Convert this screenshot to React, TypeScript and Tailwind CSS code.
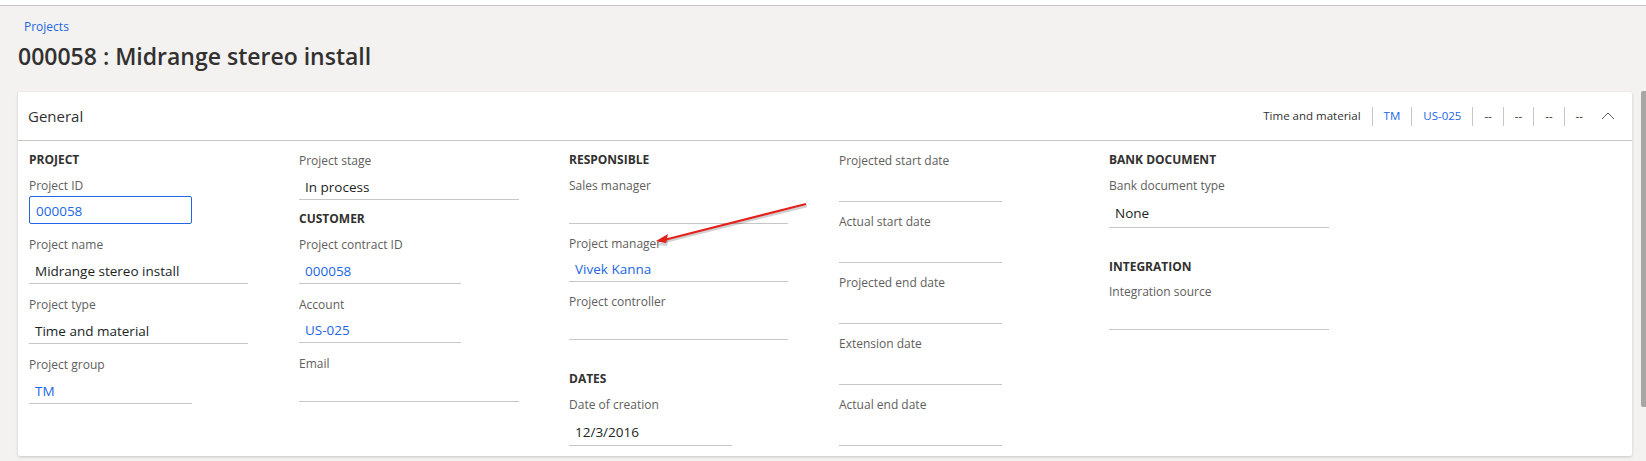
import React from "react"

const font = { fontFamily: '"Open Sans", "Noto Sans", Arial, sans-serif' }

type FieldProps = {
    label: string
    value?: string
    link?: boolean
    w: string
    h: string
    mb: string
}

function Heading({ text, mb }: { text: string; mb: string }) {
    return (
        <div className={`h-[20px] pt-[4px] flex items-center text-[12px] font-bold text-[#323130] ${mb}`}>
            {text}
        </div>
    )
}

function Field({ label, value, link, w, h, mb }: FieldProps) {
    return (
        <div className={mb}>
            <div className="h-[20px] flex items-center text-[12px] text-[#605e5c]">{label}</div>
            <div className={`${w} ${h} pt-[4px] flex items-center pl-[6px] border-b border-[#c8c6c4] text-[13.5px] ${link ? "text-[#2266e3]" : "text-[#201f1e]"}`}>
                {value}
            </div>
        </div>
    )
}

function HeaderSummary() {
    const items: { text: string; link?: boolean }[] = [
        { text: "Time and material" },
        { text: "TM", link: true },
        { text: "US-025", link: true },
        { text: "--" },
        { text: "--" },
        { text: "--" },
        { text: "--" },
    ]
    return (
        <div className="flex items-center text-[11.5px]">
            {items.map((it, i) => (
                <div key={i} className="flex items-center">
                    {i > 0 && <div className="w-px h-[19px] bg-[#c8c6c4]" />}
                    <span className={`px-[11px] ${it.link ? "text-[#2266e3]" : "text-[#323130]"}`}>{it.text}</span>
                </div>
            ))}
            <svg width="14" height="8" viewBox="0 0 14 8" className="ml-[7px]">
                <path d="M1 7 L7 1 L13 7" fill="none" stroke="#605e5c" strokeWidth="1" />
            </svg>
        </div>
    )
}

export default function App() {
    return (
        <div className="relative w-full h-[461px] overflow-hidden bg-[#f3f2f1]" style={font}>
            <div className="h-[5px] bg-white" />
            <div className="h-px bg-[#c6c6c6]" />

            <div className="ml-[24px] mt-[12px] h-[18px] flex items-center text-[12px] text-[#2266e3]">Projects</div>
            <div className="ml-[18px] mt-[7px] h-[26px] flex items-center text-[23px] font-semibold text-[#323130]">
                000058 : Midrange stereo install
            </div>

            <div className="ml-[18px] mr-[14px] mt-[23px] h-[364px] bg-white rounded-[2px] shadow-[0_1px_3px_rgba(0,0,0,0.18)]">
                <div className="h-[49px] flex items-center justify-between pl-[10px] pr-[17px] border-b border-[#c8c6c4]">
                    <span className="text-[15px] text-[#323130]">General</span>
                    <HeaderSummary />
                </div>

                <div className="grid grid-cols-[270px_270px_270px_270px_1fr] pl-[11px]">
                    <div className="pt-[7px]">
                        <Heading text="PROJECT" mb="mb-[8px]" />
                        <div className="mb-[11px]">
                            <div className="h-[20px] flex items-center text-[12px] text-[#605e5c]">Project ID</div>
                            <div className="w-[163px] h-[28px] pt-[2px] flex items-center pl-[6px] border border-[#2266e3] rounded-[2px] text-[13.5px] text-[#2266e3]">
                                000058
                            </div>
                        </div>
                        <Field label="Project name" value="Midrange stereo install" w="w-[219px]" h="h-[29px]" mb="mb-[11px]" />
                        <Field label="Project type" value="Time and material" w="w-[219px]" h="h-[29px]" mb="mb-[11px]" />
                        <Field label="Project group" value="TM" link w="w-[163px]" h="h-[29px]" mb="" />
                    </div>

                    <div className="pt-[10px]">
                        <Field label="Project stage" value="In process" w="w-[220px]" h="h-[29px]" mb="mb-[7px]" />
                        <Heading text="CUSTOMER" mb="mb-[8px]" />
                        <Field label="Project contract ID" value="000058" link w="w-[162px]" h="h-[29px]" mb="mb-[11px]" />
                        <Field label="Account" value="US-025" link w="w-[162px]" h="h-[28px]" mb="mb-[11px]" />
                        <Field label="Email" w="w-[220px]" h="h-[28px]" mb="" />
                    </div>

                    <div className="pt-[7px]">
                        <Heading text="RESPONSIBLE" mb="mb-[8px]" />
                        <Field label="Sales manager" w="w-[219px]" h="h-[28px]" mb="mb-[10px]" />
                        <Field label="Project manager" value="Vivek Kanna" link w="w-[219px]" h="h-[28px]" mb="mb-[10px]" />
                        <Field label="Project controller" w="w-[219px]" h="h-[28px]" mb="mb-[27px]" />
                        <Heading text="DATES" mb="mb-[8px]" />
                        <Field label="Date of creation" value="12/3/2016" w="w-[163px]" h="h-[31px]" mb="" />
                    </div>

                    <div className="pt-[10px]">
                        <Field label="Projected start date" w="w-[163px]" h="h-[31px]" mb="mb-[10px]" />
                        <Field label="Actual start date" w="w-[163px]" h="h-[31px]" mb="mb-[10px]" />
                        <Field label="Projected end date" w="w-[163px]" h="h-[31px]" mb="mb-[10px]" />
                        <Field label="Extension date" w="w-[163px]" h="h-[31px]" mb="mb-[10px]" />
                        <Field label="Actual end date" w="w-[163px]" h="h-[31px]" mb="" />
                    </div>

                    <div className="pt-[7px]">
                        <Heading text="BANK DOCUMENT" mb="mb-[8px]" />
                        <Field label="Bank document type" value="None" w="w-[220px]" h="h-[32px]" mb="mb-[27px]" />
                        <Heading text="INTEGRATION" mb="mb-[7px]" />
                        <Field label="Integration source" w="w-[220px]" h="h-[28px]" mb="" />
                    </div>
                </div>
            </div>

            {/* scrollbar thumb */}
            <div className="absolute right-0 top-[91px] w-[5px] h-[316px] rounded-l-[2px] bg-[#a6a6a6]" />

            {/* red annotation arrow */}
            <svg className="absolute left-0 top-0 pointer-events-none" width="1646" height="461">
                <line x1="807" y1="206" x2="664" y2="242" stroke="rgba(0,0,0,0.18)" strokeWidth="2.5" />
                <path d="M656 243 L668 236 L666 244 Z" fill="rgba(0,0,0,0.18)" transform="translate(1 2)" />
                <line x1="806" y1="204" x2="664" y2="240" stroke="#e3201b" strokeWidth="2" />
                <path d="M656 241 L668 234 L666 243 Z" fill="#e3201b" />
            </svg>
        </div>
    )
}
